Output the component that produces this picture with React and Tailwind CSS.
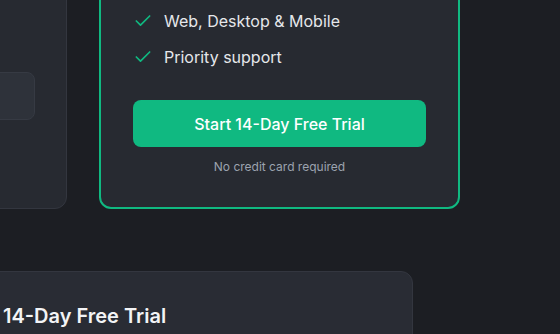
import React from 'react';
import { Check } from 'lucide-react';

const basicFeatures = ['Up to 3 projects', 'Basic analytics', 'Community forum', 'Web access only'];
const proFeatures = ['Unlimited projects', 'Advanced analytics', 'Team collaboration', 'Web, Desktop & Mobile', 'Priority support'];

const App = () => {
  return (
    <div className="min-h-screen w-[560px] h-[334px] overflow-hidden bg-[#1c1e23] font-['Inter','Liberation_Sans',sans-serif]">
      {/* Plans */}
      <div className="flex gap-8 -mt-[133px] -ml-[294px]">
        <div className="w-[361px] flex flex-col rounded-xl border border-[#33363f] bg-[#272a31] py-8 pl-8 pr-[31px]">
          <ul className="space-y-3">
            {basicFeatures.map((f) => (
              <li key={f} className="flex items-center gap-[11px] text-base leading-6 text-[#e5e7eb]">
                <Check className="w-5 h-5 text-[#10b981]" strokeWidth={2} />
                {f}
              </li>
            ))}
          </ul>
          <button className="mt-10 h-[48px] w-full rounded-lg border border-[#363a43] bg-[#2e323a] text-base font-medium text-[#e5e7eb]">
            Get Started
          </button>
        </div>

        <div className="w-[361px] rounded-xl border-2 border-[#10b981] bg-[#272a31] p-8">
          <ul className="space-y-3">
            {proFeatures.map((f) => (
              <li key={f} className="flex items-center gap-[11px] text-base leading-6 text-[#e5e7eb]">
                <Check className="w-5 h-5 text-[#10b981]" strokeWidth={2} />
                {f}
              </li>
            ))}
          </ul>
          <button className="mt-[31px] h-[47px] w-full rounded-lg bg-[#10b981] text-base font-medium text-white">
            Start 14-Day Free Trial
          </button>
          <p className="mt-3 text-center text-xs leading-4 text-[#9ca3af]">No credit card required</p>
        </div>
      </div>

      {/* Trial info */}
      <div className="mt-[62px] -ml-[30px] w-[443px] rounded-xl border border-[#33363f] bg-[#292c34] pt-[30px] px-8 pb-8">
        <h3 className="text-xl leading-7 font-semibold text-[#f3f4f6]">14-Day Free Trial</h3>
        <p className="mt-2 text-sm text-[#9ca3af]">Try every Pro feature free for two weeks.</p>
      </div>
    </div>
  );
};

export default App;
